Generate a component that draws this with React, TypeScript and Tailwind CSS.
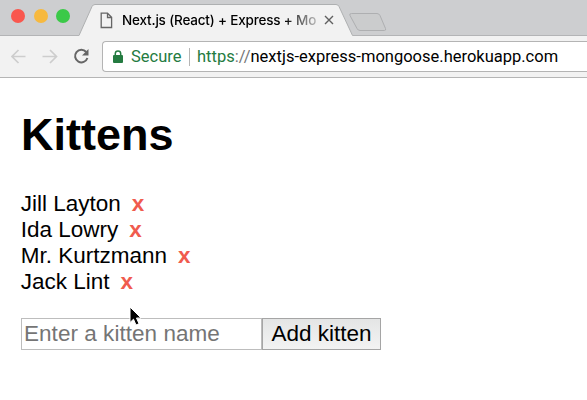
const kittens = ['Jill Layton', 'Ida Lowry', 'Mr. Kurtzmann', 'Jack Lint'];

function TabStrip() {
  return (
    <div className="flex h-9 items-start border-b border-[#b3b4b6] bg-[#cdced0]">
      <div className="flex h-8 w-[79px] shrink-0 items-center gap-[8.5px] pl-[11px]">
        <span className="size-[14px] rounded-full bg-[#f9574e]" />
        <span className="size-[14px] rounded-full bg-[#f7b93f]" />
        <span className="size-[14px] rounded-full bg-[#3bc948]" />
      </div>
      <div className="relative h-9 w-[274px] shrink-0">
        <svg className="absolute inset-0" width="274" height="36" viewBox="0 0 274 36">
          <path d="M0 35.5 L13 6.5 Q14 4.5 16 4.5 H257 Q259 4.5 260 6.5 L273.5 35.5 V36 H0Z" fill="#f2f2f2" />
          <path d="M0 35.5 L13 6.5 Q14 4.5 16 4.5 H257 Q259 4.5 260 6.5 L273.5 35.5" fill="none" stroke="#aeb0b1" />
        </svg>
        <div className="relative flex h-10 items-center pl-[21px]">
          <svg width="13" height="17" viewBox="0 0 13 17" fill="none" stroke="#666" strokeWidth="1.3">
            <path d="M1.2 1.2H7.5L11.6 5.3V15.5H1.2Z M7.5 1.2V5.5H11.6" />
          </svg>
          <span className="ml-[9px] w-[198px] overflow-hidden bg-linear-to-r from-black from-82% to-black/15 to-100% bg-clip-text font-[Inter,sans-serif] text-[13.5px] font-medium tracking-[-0.18px] whitespace-nowrap text-transparent">
            Next.js (React) + Express + Mo
          </span>
          <svg className="ml-[4px]" width="10" height="10" viewBox="0 0 10 10" stroke="#606060" strokeWidth="1.4">
            <path d="M1 1L9 9M9 1L1 9" />
          </svg>
        </div>
      </div>
      <svg className="-ml-[5px]" width="42" height="35" viewBox="0 0 42 35">
        <path d="M3.5 13.5H29Q31 13.5 32 15.5L37.5 28.5Q38.2 30.5 36.5 30.5H12Q10 30.5 9 28.5L2 15.5Q1 13.5 3.5 13.5Z" fill="#cbcccd" stroke="#aeafb1" />
      </svg>
    </div>
  );
}

function Toolbar() {
  return (
    <div className="flex h-[42px] items-start border-b border-[#b5b5b5] bg-[#f2f2f2] pt-[5px] pl-[11px]">
      <div className="flex h-[30px] items-center">
        <svg width="15" height="15" viewBox="0 0 15 15" fill="none" stroke="#cdcdcd" strokeWidth="1.7">
          <path d="M14.5 7.5H1M7.5 1L1 7.5L7.5 14" />
        </svg>
        <svg className="ml-4" width="16" height="15" viewBox="0 0 16 15" fill="none" stroke="#cdcdcd" strokeWidth="1.7">
          <path d="M.5 7.5H14.5M8 1L14.5 7.5L8 14" />
        </svg>
        <svg className="ml-[15px]" width="17" height="17" viewBox="0 0 17 17">
          <path d="M13.2 4A6.3 6.3 0 1 0 14.4 10" fill="none" stroke="#666" strokeWidth="2" />
          <path d="M15.5 1V7.5H9Z" fill="#666" />
        </svg>
      </div>
      <div className="ml-3 flex h-[31px] flex-1 items-center rounded-l-[4px] border border-r-0 border-[#b4b4b4] bg-white pl-[10px] font-[Roboto,sans-serif] text-[16.5px] whitespace-nowrap">
        <svg width="10" height="13" viewBox="0 0 10 13">
          <rect y="5" width="10" height="8" rx="1" fill="#247b41" />
          <path d="M2.3 6V3.6A2.7 2.7 0 0 1 7.7 3.6V6" fill="none" stroke="#247b41" strokeWidth="1.5" />
        </svg>
        <span className="ml-[8px] w-[51px] pt-px text-[#247b41]">Secure</span>
        <span className="ml-[7px] h-[18px] w-px bg-[#b5b5b5]" />
        <span className="ml-[7px] pt-px text-black">
          <span className="text-[#247b41]">https</span>
          <span className="text-[#777]">://</span>nextjs-express-mongoose.herokuapp.com
        </span>
      </div>
    </div>
  );
}

export default function App() {
  return (
    <div className="relative h-[400px] w-[587px] overflow-hidden bg-white">
      <TabStrip />
      <Toolbar />
      <main className="pl-5 font-['Liberation_Sans',Arial,sans-serif] text-[22.5px] leading-[26px] text-black">
        <h1 className="pt-[31px] pl-px text-[45px] leading-[52px] font-bold">Kittens</h1>
        <ul className="mt-[30px] pl-[0.7px]">
          {kittens.map((name) => (
            <li key={name} className="flex h-[26px]">
              <span>{name}</span>
              <button className="ml-[11px] font-bold text-[#f05b4e]">x</button>
            </li>
          ))}
        </ul>
        <form className="mt-[23px] flex h-8 pl-px">
          <input
            className="w-[241px] border border-[#bdbdbd] bg-white px-[2px] placeholder:tracking-[0.04px] placeholder:text-[#757575]"
            placeholder="Enter a kitten name"
          />
          <button type="button" className="w-[119px] border border-[#a5a5a5] bg-linear-to-b from-[#e4e5e5] to-[#f3f3f3]">
            Add kitten
          </button>
        </form>
      </main>
      <svg className="absolute top-[305px] left-[128px]" width="15" height="23" viewBox="0 0 15 23">
        <path d="M2 2V17.5L5.5 14.2L8 20L11 18.7L8.5 13H13Z" fill="#000" stroke="#fff" strokeWidth="1" />
      </svg>
    </div>
  );
}
